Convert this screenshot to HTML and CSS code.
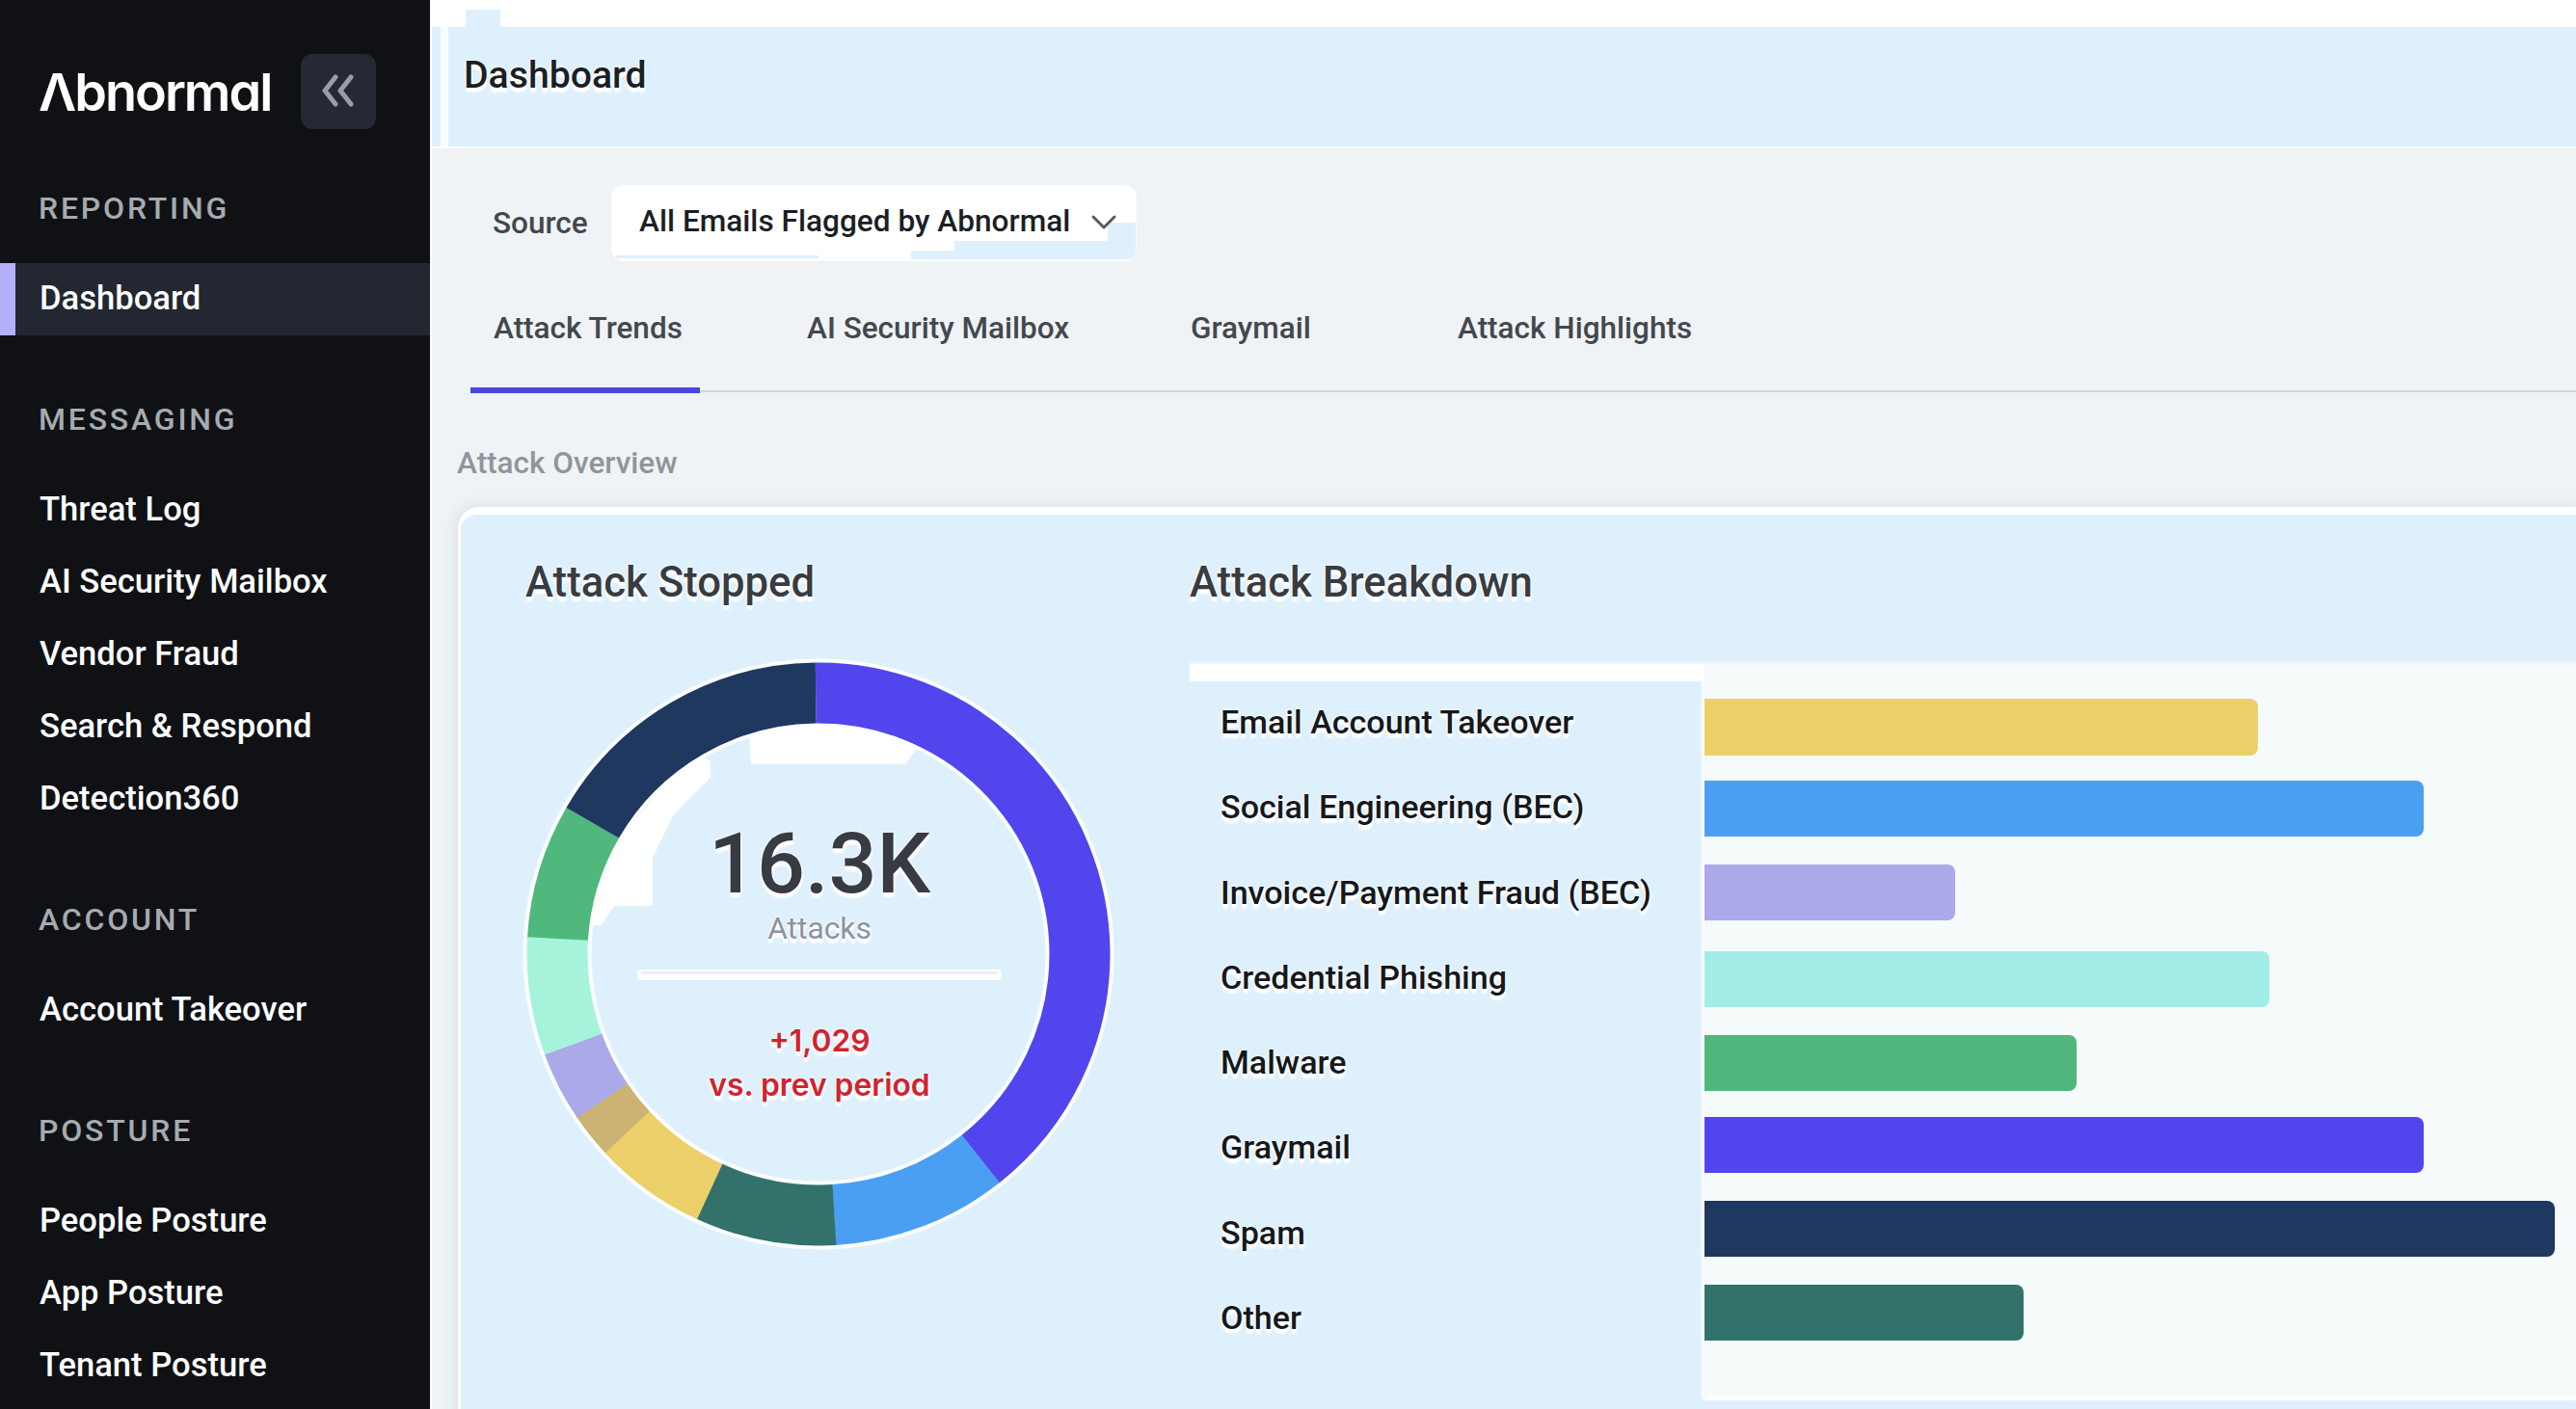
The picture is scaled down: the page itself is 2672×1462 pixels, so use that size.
FILE: index.html
```html
<!DOCTYPE html>
<html lang="en">
<head>
  <meta charset="UTF-8" />
  <meta name="viewport" content="width=device-width, initial-scale=1.0"/>
  <title>Abnormal - Dashboard</title>
  <link rel="stylesheet" href="styles.css">
</head>
<body>
  <aside class="sidebar">
    <div class="brand">
      <div class="logo">Λbnormal</div>
      <button class="collapse" aria-label="Collapse sidebar">
        <svg width="34" height="34" viewBox="0 0 34 34">
          <path d="M14 3 L3 17 L14 31 M30 3 L19 17 L30 31" />
        </svg>
      </button>
    </div>

    <nav class="group">
      <h2>REPORTING</h2>
      <a class="active">Dashboard</a>
    </nav>
    <nav class="group">
      <h2>MESSAGING</h2>
      <a>Threat Log</a>
      <a>AI Security Mailbox</a>
      <a>Vendor Fraud</a>
      <a>Search &amp; Respond</a>
      <a>Detection360</a>
    </nav>
    <nav class="group">
      <h2>ACCOUNT</h2>
      <a>Account Takeover</a>
    </nav>
    <nav class="group">
      <h2>POSTURE</h2>
      <a>People Posture</a>
      <a>App Posture</a>
      <a>Tenant Posture</a>
    </nav>
  </aside>

  <main class="main">
    <header class="topbar">
      <h1>Dashboard</h1>
    </header>

    <div class="source">
      <span class="source-label">Source</span>
      <div class="select">
        <span>All Emails Flagged by Abnormal</span>
        <svg width="28" height="18" viewBox="0 0 28 18"><path d="M3 4 L14 15 L25 4" /></svg>
      </div>
    </div>

    <div class="tabs">
      <div class="tab selected">Attack Trends</div>
      <div class="tab">AI Security Mailbox</div>
      <div class="tab">Graymail</div>
      <div class="tab">Attack Highlights</div>
    </div>

    <h2 class="section-title">Attack Overview</h2>

    <section class="card">
      <div class="stopped">
        <h3>Attack Stopped</h3>
        <div class="donut">
          <svg width="620" height="620" viewBox="-310 -310 620 620">
            <circle class="halo" r="271" />
            <path class="crescent" d="M-72 -230 A241 241 0 0 1 105 -217 L90 -197 H-70 Z" />
            <path class="crescent" d="M-206 -120 L-130 -210 L-112 -200 L-112 -183 L-150 -145 L-172 -100 V-50 H-212 L-225 -30 L-240 -30 Z" />
            <g class="ring" transform="rotate(-90.6)">
              <circle r="271" pathLength="360" stroke="#5245ed" stroke-dasharray="142.3 360" />
              <circle r="271" pathLength="360" stroke="#4a9ff3" stroke-dasharray="35 360" stroke-dashoffset="-142.2" />
              <circle r="271" pathLength="360" stroke="#32726b" stroke-dasharray="28.2 360" stroke-dashoffset="-177.1" />
              <circle r="271" pathLength="360" stroke="#ebd069" stroke-dasharray="22.5 360" stroke-dashoffset="-205.2" />
              <circle r="271" pathLength="360" stroke="#ccb373" stroke-dasharray="8.9 360" stroke-dashoffset="-227.6" />
              <circle r="271" pathLength="360" stroke="#aca9ea" stroke-dasharray="14.1 360" stroke-dashoffset="-236.4" />
              <circle r="271" pathLength="360" stroke="#a6f3dc" stroke-dasharray="23.7 360" stroke-dashoffset="-250.4" />
              <circle r="271" pathLength="360" stroke="#50b87c" stroke-dasharray="26.9 360" stroke-dashoffset="-274" />
              <circle r="271" pathLength="360" stroke="#1f3860" stroke-dasharray="59.2 360" stroke-dashoffset="-300.8" />
            </g>
          </svg>
          <div class="donut-text">
            <div class="total">16.3K</div>
            <div class="unit">Attacks</div>
            <div class="rule"></div>
            <div class="delta">+1,029<br>vs. prev period</div>
          </div>
        </div>
      </div>

      <div class="breakdown">
        <h3>Attack Breakdown</h3>
        <div class="chart">
          <div class="labels">
            <div>Email Account Takeover</div>
            <div>Social Engineering (BEC)</div>
            <div>Invoice/Payment Fraud (BEC)</div>
            <div>Credential Phishing</div>
            <div>Malware</div>
            <div>Graymail</div>
            <div>Spam</div>
            <div>Other</div>
          </div>
          <div class="bars">
            <div class="bar yellow" style="width: 574px"></div>
            <div class="bar blue" style="width: 746px"></div>
            <div class="bar lavender" style="width: 260px"></div>
            <div class="bar mint" style="width: 586px"></div>
            <div class="bar green" style="width: 386px"></div>
            <div class="bar purple" style="width: 746px"></div>
            <div class="bar navy" style="width: 882px"></div>
            <div class="bar teal" style="width: 331px"></div>
          </div>
        </div>
      </div>
    </section>
  </main>
</body>
</html>
```

FILE: styles.css
```css
* {
  box-sizing: border-box;
}

body {
  font-family: Roboto, sans-serif;
  font-weight: 500;
  background: #eff3f5;
  margin: 0;
  height: 1462px;
  display: flex;
  overflow: hidden;
}

h1, h2, h3 {
  margin: 0;
  font-weight: 500;
}

/* Sidebar */
.sidebar {
  width: 446px;
  height: 1462px;
  flex-shrink: 0;
  background: #101115;
  overflow: hidden;
}

.brand {
  height: 196px;
  padding: 56px 56px 0 40px;
  display: flex;
  align-items: flex-start;
  justify-content: space-between;
}

.logo {
  font-family: Inter, sans-serif;
  font-feature-settings: "cv11";
  font-size: 54px;
  font-weight: 600;
  line-height: 79px;
  letter-spacing: -2px;
  color: #fff;
}

.collapse {
  width: 78px;
  height: 78px;
  padding: 0;
  border: none;
  border-radius: 12px;
  background: #262833;
  display: flex;
  align-items: center;
  justify-content: center;
}

.collapse svg {
  fill: none;
  stroke: #9a9da6;
  stroke-width: 5;
  stroke-linecap: round;
  stroke-linejoin: round;
  margin: 0 1px 3px 0;
}

.group {
  margin-bottom: 67.5px;
}

.group h2 {
  height: 40px;
  line-height: 40px;
  margin-bottom: 36.5px;
  padding-left: 40px;
  font-size: 32px;
  letter-spacing: 2.8px;
  color: #a5abb1;
}

.group a {
  display: block;
  height: 75px;
  line-height: 72px;
  padding-left: 41px;
  font-size: 34.6px;
  color: #fcfdfe;
}

.group .active {
  background: #222731;
  border-left: 16px solid #b4b0fb;
  padding-left: 25px;
}

/* Main column */
.main {
  flex: 1;
  min-width: 0;
  border-left: 2px solid #fbfdfd;
}

.topbar {
  height: 154px;
  padding: 28px 0 0 33px;
  border-bottom: 2px solid #fbfdfd;
  background:
    linear-gradient(#def0fc, #def0fc) 35px 10px / 36px 18px no-repeat,
    linear-gradient(#fafdff, #fafdff) 9px 28px / 8px 124px no-repeat,
    linear-gradient(#fff 28px, #def0fc 28px);
}

.topbar h1 {
  font-size: 39.2px;
  line-height: 100px;
  color: #1b1f25;
}

.topbar h1,
.card h3,
.labels,
.donut-text {
  text-shadow: 0 0 2px #fff, 0 0 3px #fff, 1px 3px 2px #fff, 0 5px 2px #fff;
}

.source {
  display: flex;
  align-items: center;
  padding: 38px 0 0 63px;
}

.source-label {
  width: 123px;
  font-size: 31.5px;
  line-height: 75px;
  color: #43484d;
}

.select {
  display: flex;
  align-items: center;
  width: 545px;
  height: 79px;
  padding: 0 19px 4px 28px;
  justify-content: space-between;
  border: 1px solid #fbfdfe;
  border-radius: 12px;
  font-size: 31.6px;
  color: #1b1f25;
  background:
    linear-gradient(#def0fc, #def0fc) 514px 38px / 30px 36px no-repeat,
    linear-gradient(#def0fc, #def0fc) 355px 57px / 190px 12px no-repeat,
    linear-gradient(#def0fc, #def0fc) 310px 67px / 235px 9px no-repeat,
    linear-gradient(#def0fc, #def0fc) 4px 72px / 210px 3px no-repeat,
    #fff;
}

.select svg {
  fill: none;
  stroke: #555b62;
  stroke-width: 3;
  stroke-linecap: round;
  stroke-linejoin: round;
}

.tabs {
  display: grid;
  grid-template-columns: 349px 398px 277px 1fr;
  margin: 19px 0 0 40px;
  height: 118px;
  background: linear-gradient(#cfd5da, #cfd5da) 0 115px / 100% 2px no-repeat;
}

.tab {
  font-size: 31.5px;
  line-height: 102px;
  color: #43484d;
}

.tabs .selected {
  width: 238px;
  padding-left: 24px;
  border-bottom: 6px solid #4b46dc;
}

.section-title {
  margin-top: 53px;
  padding-left: 26px;
  font-size: 31.5px;
  line-height: 40px;
  color: #8e959d;
}

/* Overview card */
.card {
  display: flex;
  margin: 25px 0 0 27px;
  height: 960px;
  padding-left: 67px;
  border-left: 3px solid #fff;
  border-top: 8px solid #fff;
  border-top-left-radius: 22px;
  background: #def0fc;
  box-shadow: -2px -1px 12px 2px #dfe3e5;
}

.card h3 {
  font-size: 43.7px;
  line-height: 60px;
  margin-top: 40px;
  color: #383c42;
}

.stopped {
  width: 689px;
  flex-shrink: 0;
}

.donut {
  display: grid;
  width: 620px;
  margin: 46px 0 0 -6px;
}

.donut > * {
  grid-area: 1 / 1;
}

.donut circle {
  fill: none;
  stroke-width: 63;
}

.donut .halo {
  stroke: #fbfdfe;
  stroke-width: 71;
}

.donut .crescent {
  fill: #fff;
}

.donut-text {
  padding: 166px 0 0 2px;
  text-align: center;
}

.total {
  font-size: 88px;
  line-height: 100px;
  color: #383c42;
}

.unit {
  margin-top: -3px;
  font-size: 31.8px;
  font-weight: 400;
  line-height: 40px;
  color: #8e939c;
}

.rule {
  width: 378px;
  height: 11px;
  margin: 23px auto 0;
  border: solid #fff;
  border-width: 2px 4px 6px;
  border-radius: 4px;
  background: #eceeef;
}

.delta {
  margin-top: 40px;
  font-family: Inter, sans-serif;
  font-size: 31.8px;
  font-weight: 600;
  line-height: 46px;
  color: #cf2430;
}

.breakdown {
  flex: 1;
}

.chart {
  display: flex;
  height: 767px;
  margin-top: 52px;
  border-top: 3px solid #f1f4f6;
  background: linear-gradient(#fff, #fff) 0 0 / 536px 18px no-repeat;
}

.labels {
  width: 534px;
  padding: 16px 0 0 32px;
  font-size: 34.1px;
  line-height: 88.3px;
  color: #15181d;
}

.bars {
  flex: 1;
  display: flex;
  flex-direction: column;
  padding-top: 36px;
  border-left: 3px solid #f4f7f8;
  border-bottom: 5px solid #fff;
  background: #f5fafb;
  box-shadow: -4px 0 3px -1px #fff;
}

.bar {
  height: 58.5px;
  margin: 0 0 28.5px -3px;
  border-radius: 0 8px 8px 0;
}

.yellow { background: #ebd069; margin-bottom: 26px; }
.blue { background: #4a9ff3; }
.lavender { background: #aca9ea; margin-bottom: 31.5px; }
.mint { background: #a2ede8; }
.green { background: #50b87c; margin-bottom: 26.5px; }
.purple { background: #5245ed; }
.navy { background: #1f3860; }
.teal { background: #32726b; }
```
